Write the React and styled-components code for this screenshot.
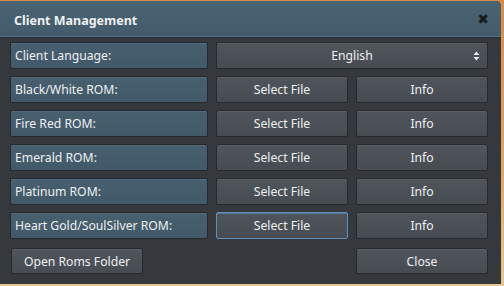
import React from "react";
import styled, { createGlobalStyle } from "styled-components";

const Global = createGlobalStyle`
  html, body {
    margin: 0;
    padding: 0;
    width: 504px;
    height: 286px;
    overflow: hidden;
    background: linear-gradient(180deg, #d58c48 0%, #dca866 60%, #e6c690 100%);
  }
  * { box-sizing: border-box; }
`;

const Window = styled.div`
  margin-top: 1px;
  width: 501px;
  height: 283px;
  background: #35393e;
  border-top-right-radius: 5px;
  border-top-left-radius: 2px;
  overflow: hidden;
  display: flex;
  flex-direction: column;
  font-family: "Noto Sans", "Open Sans", sans-serif;
  font-size: 12.2px;
  color: #eef0f2;
`;

const TitleBar = styled.div`
  height: 36px;
  flex: none;
  display: flex;
  align-items: center;
  justify-content: space-between;
  padding: 3px 12px 0 14px;
  background: linear-gradient(180deg, #4a6372 0%, #435b6a 100%);
  border-bottom: 1px solid #56707f;
  box-shadow: 0 1px 0 #2b3034;
`;

const Title = styled.span`
  font-weight: bold;
  font-size: 12.5px;
`;

const CloseIcon = styled.span`
  color: #17191b;
  font-size: 14px;
  line-height: 1;
  font-family: "DejaVu Sans", sans-serif;
  margin-top: -3px;
`;

const Content = styled.div`
  flex: 1;
  display: flex;
  flex-direction: column;
  padding: 5px 13px 0 10px;
`;

const Grid = styled.div`
  display: grid;
  grid-template-columns: 198px 132px 132px;
  grid-auto-rows: 27px;
  column-gap: 8px;
  row-gap: 7px;
`;

const Label = styled.div`
  display: flex;
  align-items: center;
  padding-left: 4px;
  background: linear-gradient(180deg, #485f6f 0%, #42596a 100%);
  border: 1px solid #26292d;
  border-radius: 2px;
  box-shadow: inset 0 1px 0 #54697a;
  white-space: nowrap;
`;

const Button = styled.div`
  position: relative;
  display: flex;
  align-items: center;
  justify-content: center;
  background: linear-gradient(180deg, #50555c 0%, #474c52 100%);
  border: 1px solid ${({ focused }) => (focused ? "#5d8fba" : "#26292d")};
  border-radius: 2px;
  box-shadow: inset 0 1px 0 ${({ focused }) => (focused ? "#5a7a96" : "#5a5f66")};
  grid-column: ${({ span }) => (span ? `span ${span}` : "auto")};
`;

const Arrows = styled.svg`
  position: absolute;
  right: 7px;
  top: 50%;
  transform: translateY(-50%);
`;

const Footer = styled.div`
  display: flex;
  justify-content: space-between;
  margin-top: 9px;
  padding-left: 1px;
`;

const FooterButton = styled(Button)`
  width: 132px;
  height: 26px;
`;

const roms = [
  "Black/White ROM:",
  "Fire Red ROM:",
  "Emerald ROM:",
  "Platinum ROM:",
  "Heart Gold/SoulSilver ROM:",
];

export default function App() {
  return (
    <>
      <Global />
      <Window>
        <TitleBar>
          <Title>Client Management</Title>
          <CloseIcon>✖</CloseIcon>
        </TitleBar>
        <Content>
          <Grid>
            <Label>Client Language:</Label>
            <Button span={2}>
              English
              <Arrows width="7" height="10" viewBox="0 0 7 10">
                <path d="M3.5 0.5 L6.5 4 L0.5 4 Z" fill="#e8eaec" />
                <path d="M3.5 9.5 L6.5 6 L0.5 6 Z" fill="#e8eaec" />
              </Arrows>
            </Button>
            {roms.map((name, i) => (
              <React.Fragment key={name}>
                <Label>{name}</Label>
                <Button focused={i === roms.length - 1}>Select File</Button>
                <Button>Info</Button>
              </React.Fragment>
            ))}
          </Grid>
          <Footer>
            <FooterButton>Open Roms Folder</FooterButton>
            <FooterButton>Close</FooterButton>
          </Footer>
        </Content>
      </Window>
    </>
  );
}
